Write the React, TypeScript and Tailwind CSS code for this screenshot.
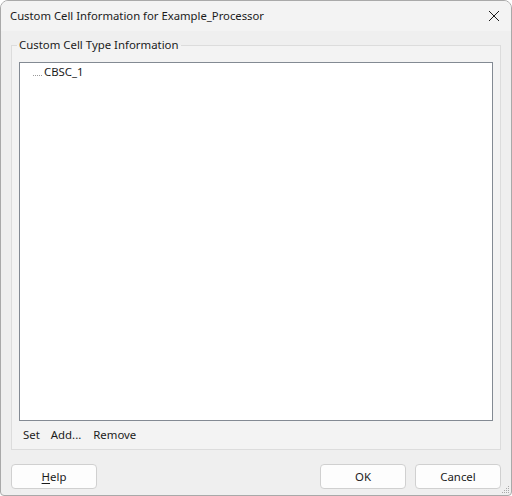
import React from "react"

const font = { fontFamily: '"Noto Sans", "Open Sans", sans-serif' }

function DialogButton({ children, className = "" }: { children: React.ReactNode; className?: string }) {
  return (
    <button
      className={
        "h-[25px] w-[86px] rounded-[4px] border border-[#d0d0d0] bg-[#fdfdfd] text-[11.4px] text-[#1b1b1b] " +
        className
      }
    >
      {children}
    </button>
  )
}

export default function App() {
  return (
    <div
      className="flex h-[496px] w-[512px] flex-col overflow-hidden rounded-t-[8px] rounded-b-[4px] border border-[#a9a9a9] bg-[#efefef] text-[#1b1b1b]"
      style={font}
    >
      {/* title bar */}
      <div className="flex h-[30px] items-center justify-between bg-[#f3f3f3] pl-[9px] pr-[10px]">
        <span className="text-[11.3px] leading-none">Custom Cell Information for Example_Processor</span>
        <svg width="12" height="12" viewBox="0 0 12 12" className="mr-[1px]">
          <path d="M1 1L11 11M11 1L1 11" stroke="#1b1b1b" strokeWidth="1" />
        </svg>
      </div>

      {/* group box */}
      <fieldset className="mx-[10px] mt-[6px] h-[413px] border border-[#dcdcdc] bg-[#f3f3f3] px-[7px] pt-[9px]">
        <legend className="ml-[-2px] px-[2px] text-[11.4px] leading-[16px]">Custom Cell Type Information</legend>
        <div className="h-[359px] w-[474px] border border-[#838a93] bg-white pl-[13px] pt-[1px]">
          <div className="flex items-center text-[11.4px] leading-[16px]">
            <span className="mr-[2px] mt-[6px] w-[9px] border-b border-dotted border-[#9a9a9a]" />
            <span>CBSC_1</span>
          </div>
        </div>
        <div className="flex h-[28px] items-center gap-[11px] pl-[4px] text-[11.4px]">
          <span>Set</span>
          <span>Add...</span>
          <span className="ml-[1px]">Remove</span>
        </div>
      </fieldset>

      {/* buttons */}
      <div className="mt-[14px] flex items-start px-[10px]">
        <DialogButton>
          <span className="underline underline-offset-2">H</span>elp
        </DialogButton>
        <div className="flex-1" />
        <DialogButton>OK</DialogButton>
        <DialogButton className="ml-[9px]">Cancel</DialogButton>
      </div>
      <div className="relative flex-1">
        <svg width="8" height="8" viewBox="0 0 8 8" className="absolute bottom-[1px] right-[1px]">
          <g fill="#a9a9a9">
            <rect x="6" y="0" width="1" height="1" />
            <rect x="4" y="2" width="1" height="1" />
            <rect x="6" y="2" width="1" height="1" />
            <rect x="2" y="4" width="1" height="1" />
            <rect x="4" y="4" width="1" height="1" />
            <rect x="6" y="4" width="1" height="1" />
            <rect x="0" y="6" width="1" height="1" />
            <rect x="2" y="6" width="1" height="1" />
            <rect x="4" y="6" width="1" height="1" />
            <rect x="6" y="6" width="1" height="1" />
          </g>
        </svg>
      </div>
    </div>
  )
}
